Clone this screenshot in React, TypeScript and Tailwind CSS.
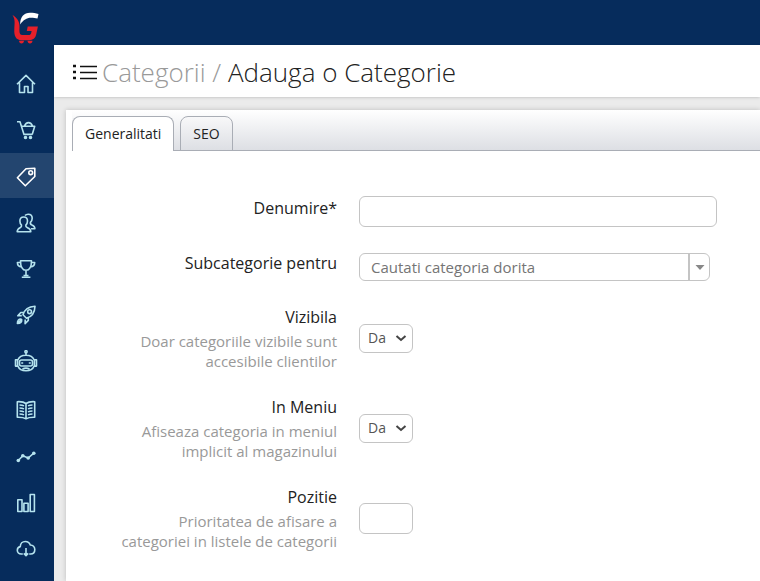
import { useState } from "react";
import type { ReactNode } from "react";

type NavItem = {
  name: string;
  href: string;
  active?: boolean;
  tall?: boolean;
  icon: ReactNode;
};

const navItems: NavItem[] = [
  {
    name: "Acasa",
    href: "#acasa",
    icon: <path d="M3 12.2 12 3.4l9 8.8M5.5 10.5v10h5v-6h3.5v6h4.5v-10" />,
  },
  {
    name: "Comenzi",
    href: "#comenzi",
    icon: (
      <>
        <path d="M3 3.7h3L10 16.4h8.2M7.3 8.2h13.4l-2.5 8.2M10.5 8c.8-2.2 2-3.4 4-3.4s3.2 1.2 4 3.4" />
        <circle cx="11.5" cy="19.5" r="1" fill="currentColor" />
        <circle cx="16.5" cy="19.5" r="1" fill="currentColor" />
      </>
    ),
  },
  {
    name: "Catalog",
    href: "#catalog",
    active: true,
    icon: (
      <>
        <path d="m3.4 13.8 8.6-9 8.8-.5v8.2L11.3 21.8z" />
        <circle cx="16.7" cy="8.7" r="1.9" />
      </>
    ),
  },
  {
    name: "Clienti",
    href: "#clienti",
    icon: (
      <>
        <path d="M7.5 15.2C6.2 14 5.9 12.5 5.9 11c0-2.5 1.5-4 3.8-4s3.8 1.5 3.8 4c0 1.5-.4 3-1.7 4.2-.3 1.5.3 2 1.7 2.6 2.2.9 3.2 1.4 3.3 3.9H3.2c.1-2.5 1-3 2.9-3.9 1.3-.6 1.7-1.1 1.4-2.6z" />
        <path d="M11 5.5c.8-.9 1.8-1.3 3.2-1.3 2.5 0 4 1.5 4 4 0 1.6-.5 3-1.8 4.2-.3 1.5.2 2.1 1.6 2.7 2 .8 2.8 1.4 2.9 3.6h-4" />
      </>
    ),
  },
  {
    name: "Marketing",
    href: "#marketing",
    icon: (
      <>
        <path d="M6.5 4.7h11c0 5-1.5 9.5-5.5 9.5S6.5 9.7 6.5 4.7zM6.6 6.5H3.4c0 3 1.5 4.2 4.2 4.5M17.4 6.5h3.3c0 3-1.5 4.2-4.3 4.5M12 14.2v5.5" />
        <path d="M9.5 19.5h5M7.8 21.3h8.6" />
      </>
    ),
  },
  {
    name: "Promovare",
    href: "#promovare",
    icon: (
      <>
        <path d="M9 12.8C10.5 7.5 14.5 4.5 21 4.2c-.2 6.5-3.2 10.5-8.5 12zM10 10.5H6.8l-3 3.3 4-.2M14.3 15.2v3.2l-3.2 3.2.1-4.2M9 12.8l3.5 3.4" />
        <circle cx="15.6" cy="9.7" r="1.9" />
        <path d="M7.3 17.2c-2.5-.3-3.9 1-3.9 4.3 3.3 0 4.5-1.4 4.3-3.7zM4 21l3-3" />
      </>
    ),
  },
  {
    name: "Asistent",
    href: "#asistent",
    tall: true,
    icon: (
      <>
        <circle cx="12" cy="1.7" r="1.1" />
        <path d="M12 2.8v2.4M3.8 10C5 6.8 8 5.2 12 5.2s7 1.6 8.2 4.8M3.8 16c1.2 3 4 4.7 8.2 4.7s7-1.7 8.2-4.7M3.6 9.8H1.5v6.3h2.1zM22.5 9.8h-2.1v6.3h2.1zM8.5 19c2.3-1.2 4.7-1.2 7 0" />
        <rect x="5.5" y="10" width="13" height="6" rx="2" />
        <path d="M8.2 12.2v1.6M15.8 12.2v1.6" strokeWidth="2" />
      </>
    ),
  },
  {
    name: "Continut",
    href: "#continut",
    icon: (
      <>
        <path d="M12 5.5C10 4 6.5 3.5 3.3 3.7v15.5c3.4-.1 6.7.3 8.7 1.6 2-1.3 5.3-1.7 8.7-1.6V3.7C17.5 3.5 14 4 12 5.5zM12 5.5v15" />
        <path d="M5.5 7c1.7 0 3 .2 4.5.9M5.5 10c1.7 0 3 .2 4.5.9M5.5 13c1.7 0 3 .2 4.5.9M5.5 16c1.7 0 3 .2 4.5.9M18.5 7c-1.7 0-3 .2-4.5.9M18.5 10c-1.7 0-3 .2-4.5.9M18.5 13c-1.7 0-3 .2-4.5.9M18.5 16c-1.7 0-3 .2-4.5.9" />
      </>
    ),
  },
  {
    name: "Statistici",
    href: "#statistici",
    icon: (
      <>
        <path d="m4.3 16.5 4.5-4.8 5.4 2.3 5.6-4.8" />
        <g fill="currentColor" stroke="none">
          <circle cx="4.3" cy="16.5" r="1.8" />
          <circle cx="8.8" cy="11.7" r="1.8" />
          <circle cx="14.2" cy="14" r="1.8" />
          <circle cx="19.8" cy="9.2" r="1.8" />
        </g>
      </>
    ),
  },
  {
    name: "Rapoarte",
    href: "#rapoarte",
    icon: (
      <path d="M3.8 9.7h4.2v11.8H3.8zM9.9 13.2h4.2v8.3H9.9zM16.2 4.5h4.2v17h-4.2z" />
    ),
  },
  {
    name: "Export",
    href: "#export",
    icon: (
      <path d="M8.8 18H7.2C4.9 18 3.3 16.5 3.3 14.3c0-1.9 1.1-3.3 3-3.7C6.3 7.5 8.5 5.5 11.3 5.5c2.4 0 4.2 1.2 5 3.5 2.7-.1 4.5 2 4.5 4.5 0 2.6-1.7 4.5-4.2 4.5h-1.4M12 12v7.5M9.8 17.4l2.2 2.2 2.2-2.2" />
    ),
  },
];

const yesNo = ["Da", "Nu"];

function Logo() {
  return (
    <svg viewBox="0 0 28 32" className="w-7 h-8" aria-hidden="true">
      <path
        d="M.5 3C5 5.5 7.5 9.5 7.5 14c0 4.5-.7 9 2.7 9h6c2 0 2.7-.8 3.1-2.6l.3-1.4h-4.8l.9-4.6h10.200l-1.700 8.200c-.8 3.800-3.200 5.600-7.200 5.600H9.500C3.600 28.200 2 23.500 2.300 17.500 2.500 11.500 3.500 7.500.5 3z"
        fill="#e6202a"
      />
      <path
        d="M8.2 12.5C8 5 12 .8 18 .8c3 0 6 .3 8.500 1.200l-1 4.500c-2-.5-4-.7-6.500-.7-4.500 0-7.500 2.200-10.800 6.700z"
        fill="#fff"
      />
      <path
        d="M7 28.700h5c-.2 1.700-1 2.700-2.500 2.700S7.200 30.400 7 28.700zM15.500 28.700h5c-.2 1.700-1 2.700-2.500 2.700s-2.300-1-2.500-2.700z"
        fill="#e6202a"
      />
    </svg>
  );
}

function Sidebar() {
  return (
    <aside className="w-[54px] shrink-0 bg-[#062c5c]">
      <nav className="flex flex-col gap-px pt-4">
        {navItems.map((item) => (
          <a
            key={item.name}
            href={item.href}
            aria-label={item.name}
            className={`flex items-center pl-3.5 ${
              item.tall ? "h-[49px]" : "h-[45px]"
            } ${item.active ? "bg-[#23456f] text-white" : "text-[#b5e3ee]"}`}
          >
            <svg
              viewBox="0 0 24 24"
              className="w-6 h-6"
              fill="none"
              stroke="currentColor"
              strokeWidth="1.6"
              strokeLinejoin="round"
            >
              {item.icon}
            </svg>
          </a>
        ))}
      </nav>
    </aside>
  );
}

function Field({
  id,
  label,
  hint,
  children,
}: {
  id: string;
  label: string;
  hint?: string;
  children: ReactNode;
}) {
  return (
    <div className={`flex gap-[22px] ${hint ? "items-center" : "items-start"}`}>
      <div className="w-[271px] shrink-0 flex flex-col items-end text-right">
        <label htmlFor={id} className="text-base leading-6 text-[#222]">
          {label}
        </label>
        {hint && (
          <p className="mt-0.5 max-w-[216px] text-[15px] leading-5 text-[#999]">
            {hint}
          </p>
        )}
      </div>
      {children}
    </div>
  );
}

function YesNoSelect({ id }: { id: string }) {
  return (
    <div className="relative w-[54px]">
      <select
        id={id}
        className="block w-full h-[29px] appearance-none rounded-md border border-[#c4c4c4] bg-white pl-2 text-sm text-[#555]"
      >
        {yesNo.map((option) => (
          <option key={option}>{option}</option>
        ))}
      </select>
      <svg
        viewBox="0 0 12 8"
        className="pointer-events-none absolute right-1.5 top-2.5 w-3 h-2"
        fill="none"
        stroke="#444"
        strokeWidth="2"
      >
        <path d="m1.5 2 4.5 4 4.5-4" />
      </svg>
    </div>
  );
}

export default function App() {
  const [tab, setTab] = useState("Generalitati");

  return (
    <div className="min-h-screen flex flex-col bg-[#ebebeb] font-['Open_Sans',sans-serif]">
      <header className="h-[45px] bg-[#062c5c]">
        <a href="#" aria-label="Gomag" className="inline-block pl-3 pt-3">
          <Logo />
        </a>
      </header>

      <div className="flex-1 flex">
        <Sidebar />

        <main className="flex-1 min-w-0 flex flex-col">
          {/* Page title */}
          <div className="flex items-center gap-[5px] h-[52px] pt-0.5 pl-[19px] bg-white shadow-sm">
            <svg
              viewBox="0 0 24 16"
              className="w-6 h-4"
              stroke="#111"
              aria-hidden="true"
            >
              <path d="M7 2.5h17M7 8.5h17M7 14.5h17" strokeWidth="1.3" />
              <path d="M0 2h3M0 8h3M0 14h3" strokeWidth="2.6" />
            </svg>
            <h1 className="text-[26px] leading-9 font-light text-[#222] whitespace-nowrap">
              <a href="#categorii" className="text-[#999]">
                Categorii /
              </a>{" "}
              Adauga o Categorie
            </h1>
          </div>

          {/* Panel */}
          <section className="flex-1 mt-[13px] ml-3 bg-white shadow-[0_0_5px_rgba(0,0,0,0.2)]">
            <div
              role="tablist"
              className="flex items-end gap-1.5 ml-1.5 pt-1.5 border-b border-[#a9adb5] bg-linear-to-b from-white to-[#dddfe4]"
            >
              {["Generalitati", "SEO"].map((name) => (
                <button
                  key={name}
                  role="tab"
                  aria-selected={tab === name}
                  onClick={() => setTab(name)}
                  className={`h-[35px] -mb-px px-3 rounded-t-lg border border-[#a9adb5] text-sm font-medium text-[#222] ${
                    tab === name
                      ? "border-b-0 bg-white"
                      : "bg-linear-to-b from-[#f8f8f9] to-[#dddfe4]"
                  }`}
                >
                  {name}
                </button>
              ))}
            </div>

            <form className="flex flex-col gap-6 pt-[45px] pb-7 pr-10">
              <Field id="denumire" label="Denumire*">
                <input
                  id="denumire"
                  type="text"
                  className="w-full max-w-[358px] h-[31px] rounded-md border border-[#c4c4c4] px-3 text-[15px]"
                />
              </Field>

              <Field id="subcategorie" label="Subcategorie pentru">
                <div className="flex w-full max-w-[351px] h-7 mt-0.5 rounded-md border border-[#c4c4c4]">
                  <input
                    id="subcategorie"
                    type="text"
                    placeholder="Cautati categoria dorita"
                    className="flex-1 min-w-0 px-[11px] text-[15px] placeholder:text-[#757575]"
                  />
                  <button
                    type="button"
                    aria-label="Deschide lista"
                    className="w-[21px] flex items-center justify-center border-l-2 border-[#c4c4c4]"
                  >
                    <svg viewBox="0 0 10 5" className="w-2.5 h-[5px]" fill="#888">
                      <path d="M.5 0h9L5 5z" />
                    </svg>
                  </button>
                </div>
              </Field>

              <Field
                id="vizibila"
                label="Vizibila"
                hint="Doar categoriile vizibile sunt accesibile clientilor"
              >
                <YesNoSelect id="vizibila" />
              </Field>

              <Field
                id="meniu"
                label="In Meniu"
                hint="Afiseaza categoria in meniul implicit al magazinului"
              >
                <YesNoSelect id="meniu" />
              </Field>

              <Field
                id="pozitie"
                label="Pozitie"
                hint="Prioritatea de afisare a categoriei in listele de categorii"
              >
                <input
                  id="pozitie"
                  type="text"
                  className="w-[54px] h-[31px] rounded-md border border-[#c4c4c4] px-2 text-sm"
                />
              </Field>
            </form>
          </section>
        </main>
      </div>
    </div>
  );
}
